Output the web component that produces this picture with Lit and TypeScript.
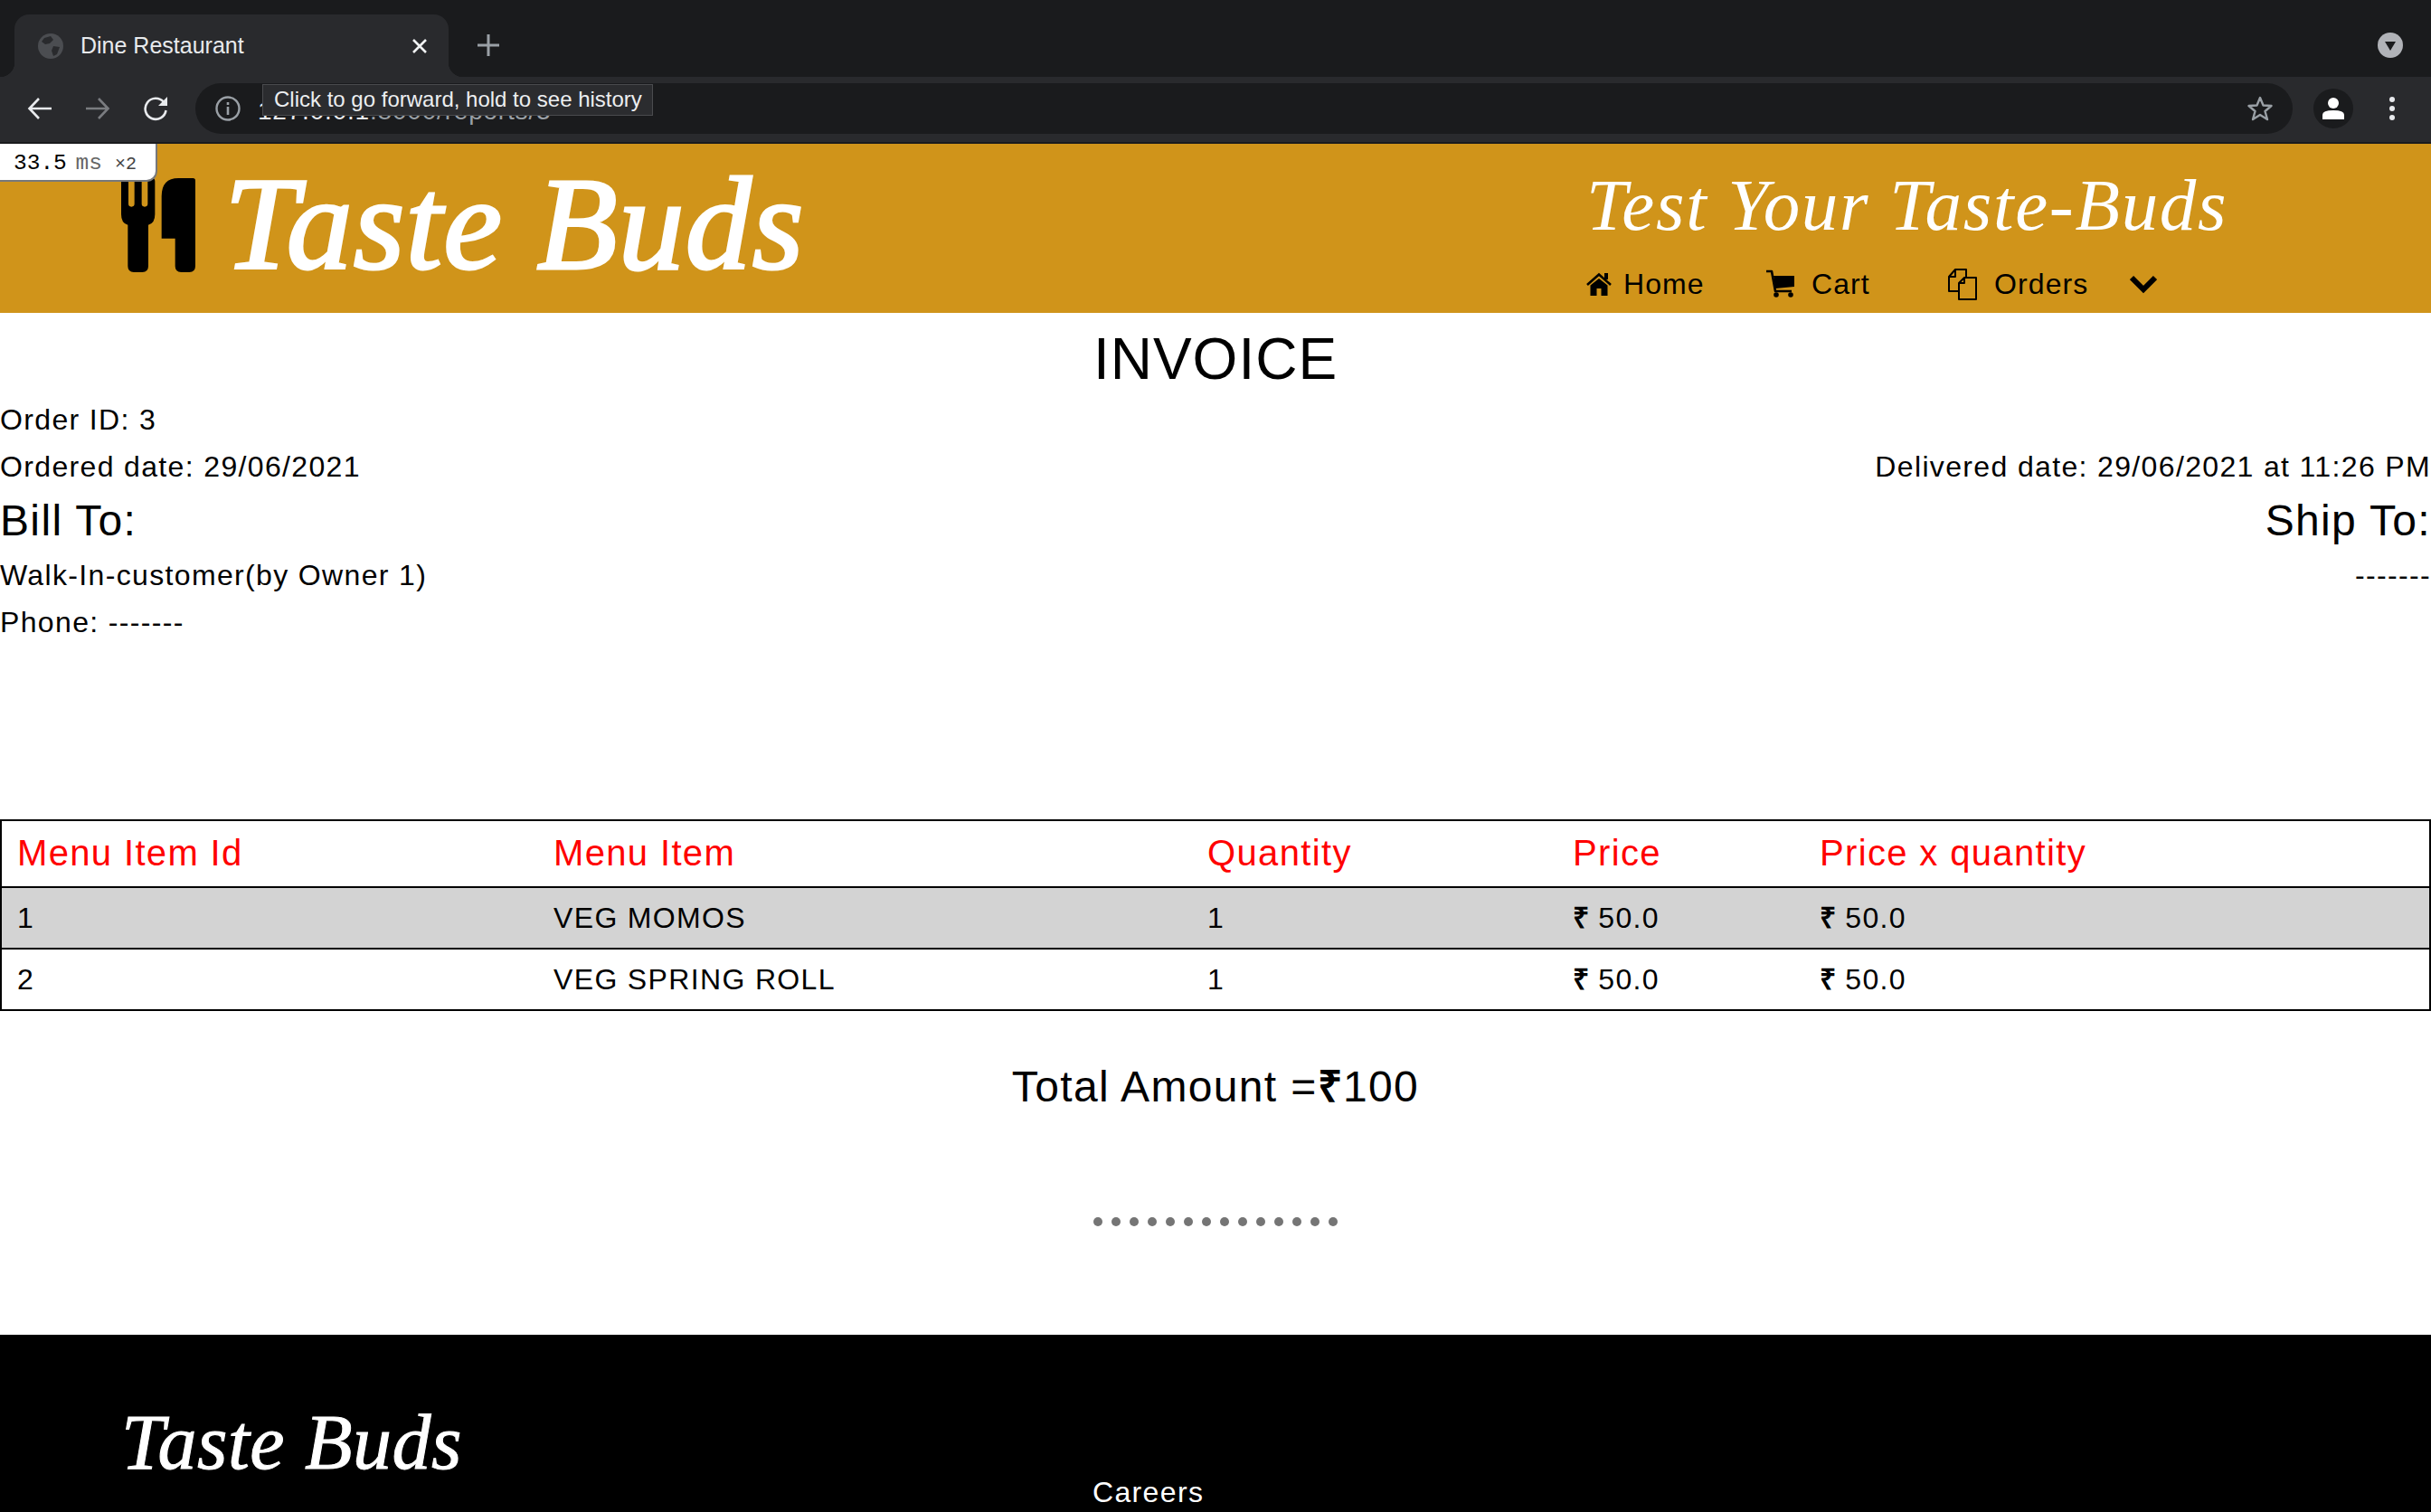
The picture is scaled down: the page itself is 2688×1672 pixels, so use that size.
import { LitElement, html, css, svg } from 'lit';
import { customElement } from 'lit/decorators.js';

const COLUMNS = ['Menu Item Id', 'Menu Item', 'Quantity', 'Price', 'Price x quantity'];
const ROWS = [
  ['1', 'VEG MOMOS', '1', '50.0', '50.0'],
  ['2', 'VEG SPRING ROLL', '1', '50.0', '50.0'],
];
const DOTS = Array.from({ length: 14 });

const icon = (w: number, h: number, box: string, body: unknown) =>
  html`<svg width=${w} height=${h} viewBox=${box}>${body}</svg>`;

const cutlery = svg`
  <path fill="#000" d="M0 10Q0 0 12 0Q24 0 24 10V85Q24 95 34 95Q44 95 44 85V0H68V85Q68 95 78 95Q88 95 88 85V10Q88 0 100 0Q112 0 112 10V120Q112 150 90 155V292Q90 312 70 312H42Q22 312 22 292V155Q0 150 0 120Z"/>
  <path fill="#000" d="M134 60Q134 0 190 0H238Q246 0 246 8V292Q246 312 226 312H199Q179 312 179 292V200H134Z"/>`;

const home = svg`
  <path fill="#000" d="M14 8L4.500 15.500V27H11.500V19H16.500V27H23.500V15.500Z"/>
  <path fill="none" stroke="#000" stroke-width="2.600" d="M1 15L14 3.500L27 15"/>
  <rect x="20" y="2" width="4" height="7" fill="#000"/>`;

const cart = svg`
  <path fill="#000" d="M8 7H31V19L10 21Z"/>
  <path fill="none" stroke="#000" stroke-width="2.600" stroke-linejoin="round" d="M0 2H6L10 24H28"/>
  <circle cx="11" cy="28" r="2.800" fill="#000"/>
  <circle cx="27" cy="28" r="2.800" fill="#000"/>`;

const files = svg`
  <g fill="none" stroke="#000" stroke-width="2" stroke-linejoin="round">
    <path d="M12 25H1V9L8 1H20V10"/>
    <path d="M8 1V9H1"/>
    <path d="M18 10H31V34H12V16Z"/>
    <path d="M18 10V16H12"/>
  </g>`;

@customElement('browser-bar')
class BrowserBar extends LitElement {
  static styles = css`
    :host { display: block; position: relative; font-family: 'Liberation Sans', Arial, sans-serif; letter-spacing: 0; }
    .strip { height: 85px; background: #1a1b1d; display: flex; align-items: flex-end; padding-left: 16px; }
    .tab {
      width: 480px; height: 69px; background: #292a2d; border-radius: 16px 16px 0 0;
      display: flex; align-items: center; padding-left: 26px; box-sizing: border-box;
      color: #e8eaed; font-size: 25px; position: relative;
    }
    .tab::before, .tab::after {
      content: ''; position: absolute; bottom: 0; width: 16px; height: 16px;
    }
    .tab::before { left: -16px; background: radial-gradient(circle at 0 0, #1a1b1d 16px, #292a2d 16.500px); }
    .tab::after { right: -16px; background: radial-gradient(circle at 100% 0, #1a1b1d 16px, #292a2d 16.500px); }
    .title { margin-left: 19px; width: 366px; }
    .plus { margin-left: 32px; align-self: center; display: flex; margin-top: 15px; }
    .spacer { flex: 1; }
    .profile { margin: 0 31px 21px 0; display: flex; }
    .toolbar {
      height: 74px; background: #292a2d; display: flex; align-items: center; box-sizing: border-box;
      border-bottom: 2px solid #1a1b1d; padding: 0 0 3px 30px;
    }
    .nav { display: flex; gap: 36px; }
    .omni {
      margin-left: 30px; width: 2319px; height: 56px; border-radius: 28px; background: #1a1b1d;
      display: flex; align-items: center; padding-left: 22px; box-sizing: border-box;
      font-size: 28px; color: #e8eaed;
    }
    .url { margin-left: 19px; flex: 1; padding-top: 7px; letter-spacing: 0.800px; }
    .url span { color: #9aa0a6; }
    .star { margin-right: 22px; display: flex; }
    .avatar {
      margin-left: 23px; width: 44px; height: 44px; border-radius: 50%; background: #1a1b1d;
      display: flex; align-items: center; justify-content: center;
    }
    .menu { margin-left: 40px; display: flex; }
    .tooltip {
      position: absolute; left: 290px; top: 93px; height: 35px; padding: 0 12px; box-sizing: border-box;
      width: 432px; background: #2b2c2f; border: 1px solid #4a4b4e; color: #eceef0; font-size: 24px; line-height: 32px;
      white-space: nowrap;
    }
  `;

  render() {
    return html`
      <div class="strip">
        <div class="tab">
          ${icon(28, 28, '0 0 28 28', svg`
            <circle cx="14" cy="14" r="14" fill="#4b4d51"/>
            <path fill="#292a2d" d="M7 5L14 3L17 7L13 11L8 12L4 9ZM17 14L24 15L21 23L17 25L15 19Z"/>`)}
          <div class="title">Dine Restaurant</div>
          ${icon(18, 18, '0 0 18 18', svg`<path stroke="#f1f3f4" stroke-width="2.600" d="M2 2L16 16M16 2L2 16"/>`)}
        </div>
        <div class="plus">
          ${icon(24, 24, '0 0 24 24', svg`<path stroke="#9aa0a6" stroke-width="3" d="M12 0V24M0 12H24"/>`)}
        </div>
        <div class="spacer"></div>
        <div class="profile">
          ${icon(28, 28, '0 0 28 28', svg`
            <circle cx="14" cy="14" r="14" fill="#b1b3b8"/>
            <path fill="#1a1b1d" d="M8 10H20L14 20Z"/>`)}
        </div>
      </div>
      <div class="toolbar">
        <div class="nav">
          ${icon(28, 28, '0 0 28 28', svg`<path fill="none" stroke="#e8eaed" stroke-width="2.600" d="M27 14H3M13 3L2.500 14L13 25"/>`)}
          ${icon(28, 28, '0 0 28 28', svg`<path fill="none" stroke="#7a7c80" stroke-width="2.600" d="M1 14H25M15 3L25.500 14L15 25"/>`)}
          ${icon(28, 28, '0 0 28 28', svg`
            <path fill="none" stroke="#e8eaed" stroke-width="2.600" d="M23 7A11.500 11.500 0 1 0 25.500 16"/>
            <path fill="#e8eaed" d="M17 11H27V1Z"/>`)}
        </div>
        <div class="omni">
          ${icon(28, 28, '0 0 28 28', svg`
            <circle cx="14" cy="14" r="12.500" fill="none" stroke="#9aa0a6" stroke-width="2.400"/>
            <path stroke="#9aa0a6" stroke-width="2.600" d="M14 12V21M14 7V10"/>`)}
          <div class="url">127.0.0.1<span>:8000/reports/3</span></div>
          <div class="star">
            ${icon(28, 28, '0 0 28 28', svg`<path fill="none" stroke="#9aa0a6" stroke-width="2.400" stroke-linejoin="round" d="M14 2L17.500 10.500L26.500 11L19.500 17L22 26L14 21L6 26L8.500 17L1.500 11L10.500 10.500Z"/>`)}
          </div>
        </div>
        <div class="avatar">
          ${icon(26, 26, '0 0 26 26', svg`
            <circle cx="13" cy="7" r="6" fill="#fff"/>
            <path fill="#fff" d="M1 25V20Q1 15 13 15Q25 15 25 20V25Z"/>`)}
        </div>
        <div class="menu">
          ${icon(6, 26, '0 0 6 26', svg`
            <circle cx="3" cy="3" r="3" fill="#e8eaed"/>
            <circle cx="3" cy="13" r="3" fill="#e8eaed"/>
            <circle cx="3" cy="23" r="3" fill="#e8eaed"/>`)}
        </div>
      </div>
      <div class="tooltip">Click to go forward, hold to see history</div>
    `;
  }
}

@customElement('app-root')
export class AppRoot extends LitElement {
  static styles = css`
    :host {
      display: block; height: 1672px; overflow: hidden; position: relative; background: #fff; color: #000;
      font-family: 'Liberation Sans', Arial, sans-serif; font-size: 32px; letter-spacing: 1.350px;
    }
    .timing {
      position: absolute; left: 0; top: 159px; width: 174px; height: 42px; box-sizing: border-box; z-index: 2;
      background: #fff; border: 2px solid #77787a; border-width: 0 2px 2px 0; border-radius: 0 0 12px 0;
      padding-left: 15px; font: 24.500px/44px 'Liberation Mono', monospace; letter-spacing: 0; white-space: nowrap;
    }
    .timing .ms { color: #666; margin-left: -5px; }
    .timing .times { font-size: 20px; color: #444; margin-left: 14px; }
    header {
      height: 187px; background: #d0941a; display: flex; box-sizing: border-box;
    }
    .brand { width: 1754px; display: flex; align-items: flex-start; padding: 38px 0 0 134px; box-sizing: border-box; }
    .logo {
      margin: -22px 0 0 32px; color: #fff; font: italic 146px/1 'Liberation Serif', cursive; letter-spacing: 1px;
      -webkit-text-stroke: 3px #fff; white-space: nowrap;
    }
    .side { display: flex; flex-direction: column; }
    .tagline {
      color: #fff; font: italic 81px/1 'Liberation Serif', cursive; letter-spacing: 1.700px;
      margin-top: 28px; height: 109px; white-space: nowrap;
    }
    .links { display: flex; align-items: center; font-size: 32px; line-height: 36px; letter-spacing: 1.100px; }
    .link { display: flex; align-items: center; }
    .home { gap: 13px; width: 199px; }
    .cart { gap: 18px; width: 201px; }
    .orders { gap: 19px; width: 201px; }
    main { height: 1130px; }
    h1 { margin: 0; height: 92px; font-size: 64px; font-weight: 400; line-height: 102px; text-align: center; letter-spacing: 1px; }
    .line { line-height: 52px; height: 52px; }
    .split { display: flex; justify-content: space-between; }
    .heading { font-size: 48px; height: 68px; line-height: 68px; }
    table {
      margin-top: 192px; width: 100%; border-collapse: collapse; table-layout: fixed; border: 2px solid #000;
    }
    .c1 { width: 594px; }
    .c2 { width: 723px; }
    .c3 { width: 404px; }
    .c4 { width: 273px; }
    th { color: #f00; font-size: 40px; font-weight: 400; text-align: left; height: 70px; padding: 0 0 2px 17px; border: 2px solid #000; border-width: 2px 0; }
    td { font-size: 32px; height: 66px; line-height: 36px; padding: 0 0 0 17px; border: 2px solid #000; border-width: 2px 0; }
    tbody tr:nth-child(odd) { background: #d3d3d3; }
    .rs { font-weight: 700; font-size: 32px; letter-spacing: 0; line-height: 1; }
    .total { margin-top: 56px; font-size: 48px; line-height: 56px; text-align: center; }
    .total .sym { font-weight: 700; }
    .dots { margin-top: 116px; display: flex; justify-content: center; gap: 10px; }
    .dots span { width: 10px; height: 10px; border-radius: 50%; background: #757575; }
    footer { height: 196px; background: #000; color: #fff; position: relative; display: flex; }
    .foot-brand { width: 1208px; padding: 76px 0 0 134px; box-sizing: border-box; }
    .foot-logo { font: italic 86px/1 'Liberation Serif', cursive; letter-spacing: 0.500px; -webkit-text-stroke: 1px #fff; white-space: nowrap; }
    .careers { margin-top: 155px; line-height: 38px; }
  `;

  private cell(value: string, index: number) {
    if (index < 3) return html`<td>${value}</td>`;
    return html`<td><span class="rs">₹</span> ${value}</td>`;
  }

  render() {
    return html`
      <browser-bar></browser-bar>
      <div class="timing">33.5 <span class="ms">ms</span><span class="times">×2</span></div>
      <header>
        <div class="brand">
          ${icon(82, 104, '0 0 246 312', cutlery)}
          <div class="logo">Taste Buds</div>
        </div>
        <div class="side">
          <div class="tagline">Test Your Taste-Buds</div>
          <div class="links">
            <div class="link home">${icon(28, 28, '0 0 28 28', home)}Home</div>
            <div class="link cart">${icon(32, 32, '0 0 32 32', cart)}Cart</div>
            <div class="link orders">${icon(32, 35, '0 0 32 35', files)}Orders</div>
            ${icon(30, 22, '0 0 30 22', svg`<path fill="none" stroke="#000" stroke-width="6" d="M2 4L15 17L28 4"/>`)}
          </div>
        </div>
      </header>
      <main>
        <h1>INVOICE</h1>
        <div class="line">Order ID: 3</div>
        <div class="split line"><span>Ordered date: 29/06/2021</span><span>Delivered date: 29/06/2021 at 11:26 PM</span></div>
        <div class="split heading"><span>Bill To:</span><span>Ship To:</span></div>
        <div class="split line"><span>Walk-In-customer(by Owner 1)</span><span>-------</span></div>
        <div class="line">Phone: -------</div>
        <table>
          <colgroup><col class="c1" /><col class="c2" /><col class="c3" /><col class="c4" /><col /></colgroup>
          <thead><tr>${COLUMNS.map((c) => html`<th>${c}</th>`)}</tr></thead>
          <tbody>${ROWS.map((r) => html`<tr>${r.map((v, i) => this.cell(v, i))}</tr>`)}</tbody>
        </table>
        <div class="total">Total Amount =<span class="sym">₹</span>100</div>
        <div class="dots">${DOTS.map(() => html`<span></span>`)}</div>
      </main>
      <footer>
        <div class="foot-brand"><div class="foot-logo">Taste Buds</div></div>
        <div class="careers">Careers</div>
      </footer>
    `;
  }
}
